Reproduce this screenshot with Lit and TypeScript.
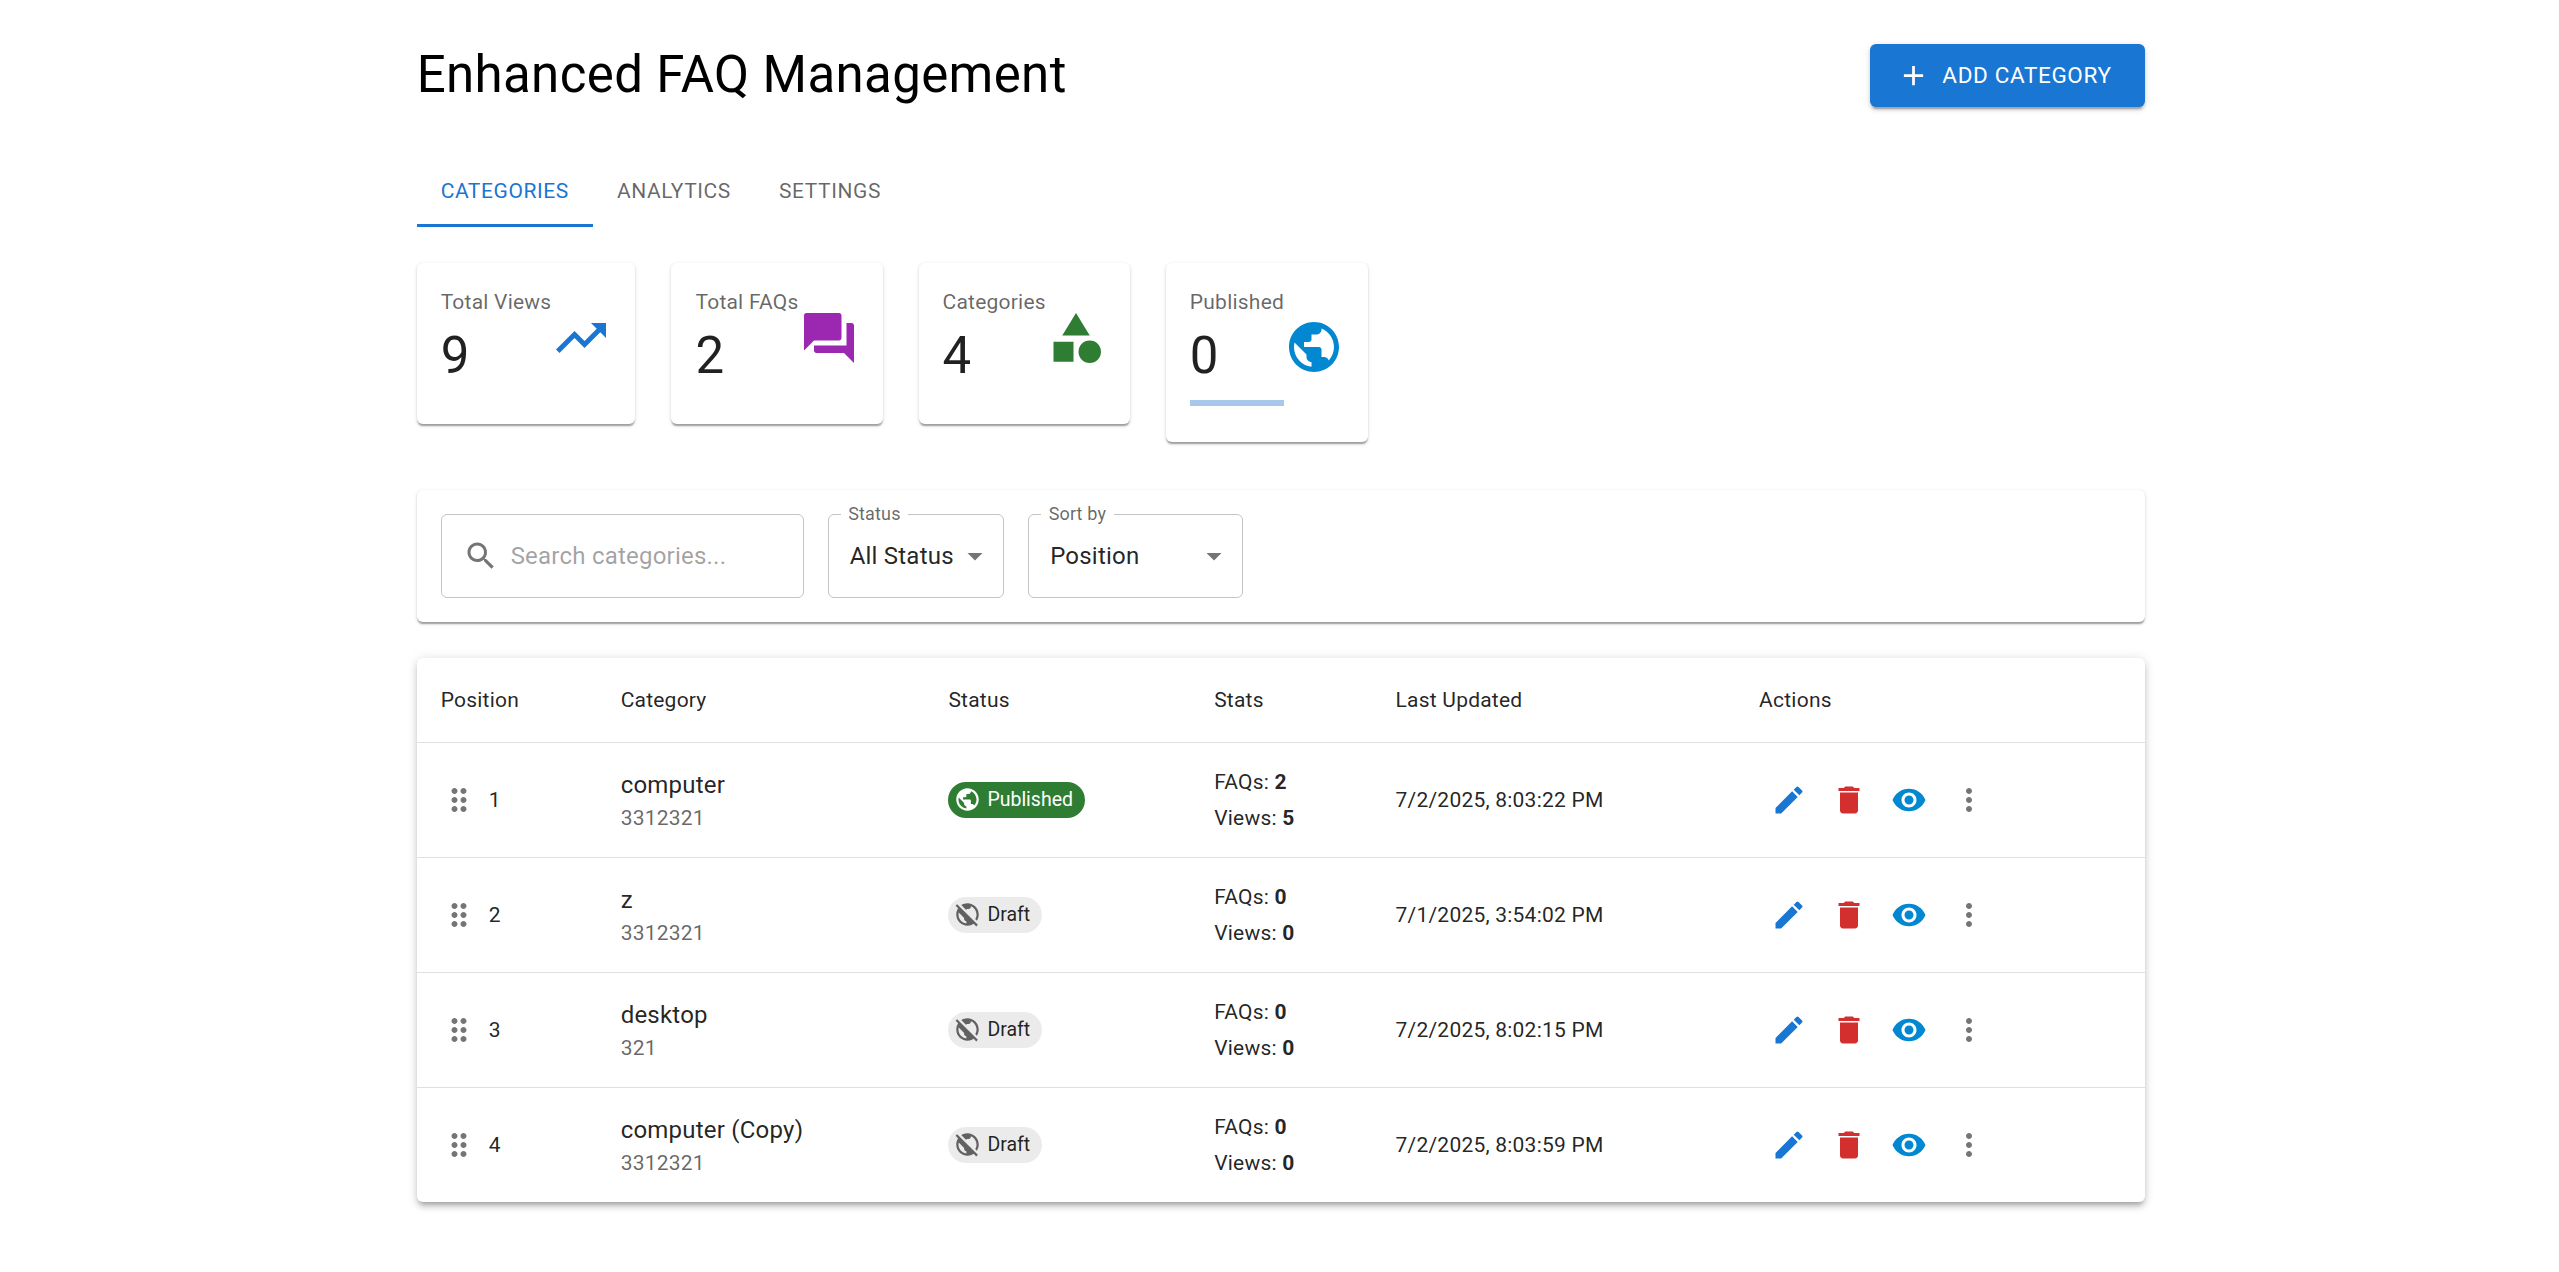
import { LitElement, html, css } from 'lit';
import { customElement } from 'lit/decorators.js';

const icons = {
  add: 'M19 13h-6v6h-2v-6H5v-2h6V5h2v6h6z',
  trending: 'm16 6 2.29 2.29-4.88 4.88-4-4L2 16.59 3.41 18l6-6 4 4 6.3-6.29L22 12V6z',
  forum: 'M21 6h-2v9H6v2c0 .55.45 1 1 1h11l4 4V7c0-.55-.45-1-1-1m-4 6V3c0-.55-.45-1-1-1H3c-.55 0-1 .45-1 1v14l4-4h10c.55 0 1-.45 1-1',
  category: 'm12 2-5.5 9h11z M3 13.5h8v8H3z M22 17.5a4.5 4.5 0 1 1-9 0 4.5 4.5 0 0 1 9 0',
  globe: 'M12 2C6.48 2 2 6.48 2 12s4.48 10 10 10 10-4.48 10-10S17.52 2 12 2m-1 17.93c-3.95-.49-7-3.85-7-7.93 0-.62.08-1.21.21-1.79L9 15v1c0 1.1.9 2 2 2zm6.9-2.54c-.26-.81-1-1.39-1.9-1.39h-1v-3c0-.55-.45-1-1-1H8v-2h2c.55 0 1-.45 1-1V7h2c1.1 0 2-.9 2-2v-.41c2.93 1.19 5 4.06 5 7.41 0 2.08-.8 3.97-2.1 5.39',
  globeOff: 'M11 8.17 6.49 3.66C8.07 2.61 9.96 2 12 2c5.52 0 10 4.48 10 10 0 2.04-.61 3.93-1.66 5.51l-1.46-1.46C19.59 14.87 20 13.48 20 12c0-3.35-2.07-6.22-5-7.41V5c0 1.1-.9 2-2 2h-2zm10.19 13.02-1.41 1.41-2.27-2.27C15.93 21.39 14.04 22 12 22 6.48 22 2 17.52 2 12c0-2.04.61-3.93 1.66-5.51L1.39 4.22 2.8 2.81zM11 18c-1.1 0-2-.9-2-2v-1l-4.79-4.79C4.08 10.79 4 11.38 4 12c0 4.08 3.05 7.44 7 7.93z',
  search: 'M15.5 14h-.79l-.28-.27C15.41 12.59 16 11.11 16 9.5 16 5.91 13.09 3 9.5 3S3 5.91 3 9.5 5.91 16 9.5 16c1.61 0 3.09-.59 4.23-1.57l.27.28v.79l5 4.99L20.49 19zm-6 0C7.01 14 5 11.99 5 9.5S7.01 5 9.5 5 14 7.01 14 9.5 11.99 14 9.5 14',
  drop: 'M7 10l5 5 5-5z',
  drag: 'M11 18c0 1.1-.9 2-2 2s-2-.9-2-2 .9-2 2-2 2 .9 2 2m-2-8c-1.1 0-2 .9-2 2s.9 2 2 2 2-.9 2-2-.9-2-2-2m0-6c-1.1 0-2 .9-2 2s.9 2 2 2 2-.9 2-2-.9-2-2-2m6 4c1.1 0 2-.9 2-2s-.9-2-2-2-2 .9-2 2 .9 2 2 2m0 2c-1.1 0-2 .9-2 2s.9 2 2 2 2-.9 2-2-.9-2-2-2m0 6c-1.1 0-2 .9-2 2s.9 2 2 2 2-.9 2-2-.9-2-2-2',
  edit: 'M3 17.25V21h3.75L17.81 9.94l-3.75-3.75zM20.71 7.04c.39-.39.39-1.02 0-1.41l-2.34-2.34a.9959.9959 0 0 0-1.41 0l-1.83 1.83 3.75 3.75z',
  trash: 'M6 19c0 1.1.9 2 2 2h8c1.1 0 2-.9 2-2V7H6zM19 4h-3.5l-1-1h-5l-1 1H5v2h14z',
  eye: 'M12 4.5C7 4.5 2.73 7.61 1 12c1.73 4.39 6 7.5 11 7.5s9.27-3.11 11-7.5c-1.73-4.39-6-7.5-11-7.5M12 17c-2.76 0-5-2.24-5-5s2.24-5 5-5 5 2.24 5 5-2.24 5-5 5m0-8c-1.66 0-3 1.34-3 3s1.34 3 3 3 3-1.34 3-3-1.34-3-3-3',
  more: 'M12 8c1.1 0 2-.9 2-2s-.9-2-2-2-2 .9-2 2 .9 2 2 2m0 2c-1.1 0-2 .9-2 2s.9 2 2 2 2-.9 2-2-.9-2-2-2m0 6c-1.1 0-2 .9-2 2s.9 2 2 2 2-.9 2-2-.9-2-2-2',
};

const icon = (d: string, cls = '') => html`<svg class="icon ${cls}" viewBox="0 0 24 24"><path d=${d}></path></svg>`;

const stats = [
  { label: 'Total Views', value: '9', d: icons.trending, color: 'primary' },
  { label: 'Total FAQs', value: '2', d: icons.forum, color: 'purple' },
  { label: 'Categories', value: '4', d: icons.category, color: 'green' },
  { label: 'Published', value: '0', d: icons.globe, color: 'info', progress: true },
];

const rows = [
  { pos: 1, name: 'computer', desc: '3312321', published: true, faqs: 2, views: 5, updated: '7/2/2025, 8:03:22 PM' },
  { pos: 2, name: 'z', desc: '3312321', published: false, faqs: 0, views: 0, updated: '7/1/2025, 3:54:02 PM' },
  { pos: 3, name: 'desktop', desc: '321', published: false, faqs: 0, views: 0, updated: '7/2/2025, 8:02:15 PM' },
  { pos: 4, name: 'computer (Copy)', desc: '3312321', published: false, faqs: 0, views: 0, updated: '7/2/2025, 8:03:59 PM' },
];

@customElement('app-root')
export class AppRoot extends LitElement {
  static styles = css`
    /* the source was captured at 1.5x, so everything below is in its own px */
    :host {
      display: block;
      zoom: 1.5;
      font-family: Roboto, "Liberation Sans", sans-serif;
      color: rgba(0, 0, 0, 0.87);
      background: #fff;
    }
    .page {
      box-sizing: border-box;
      max-width: 1200px;
      margin: 0 auto;
      padding: 29.33px 23.25px 40px 24.75px;
    }
    .icon { display: block; width: 24px; height: 24px; fill: currentColor; flex-shrink: 0; }
    .primary { color: #1976d2; }
    .purple { color: #9c27b0; }
    .green { color: #2e7d32; }
    .info { color: #0288d1; }
    .red { color: #d32f2f; }
    .grey { color: rgba(0, 0, 0, 0.54); }

    .head { display: flex; justify-content: space-between; align-items: center; margin-bottom: 32px; }
    h1 { margin: 0; font-size: 34px; font-weight: 400; line-height: 1.235; letter-spacing: 0.00735em; color: #000; }
    .add {
      display: flex;
      align-items: center;
      height: 42.25px;
      padding: 0 22px;
      box-sizing: border-box;
      border: 0;
      border-radius: 4px;
      background: #1976d2;
      color: #fff;
      font: 400 15px/26px Roboto, sans-serif;
      letter-spacing: 0.02857em;
      text-transform: uppercase;
      box-shadow: 0 3px 1px -2px rgba(0,0,0,.2), 0 2px 2px 0 rgba(0,0,0,.14), 0 1px 5px 0 rgba(0,0,0,.12);
    }
    .add .icon { width: 22px; height: 22px; margin: 0 8px 0 -4px; }

    .tabs { display: flex; height: 48px; margin-bottom: 24px; }
    .tab {
      box-sizing: border-box;
      padding: 0 16px;
      font-size: 14px;
      font-weight: 400;
      line-height: 48px;
      letter-spacing: 0.02857em;
      text-transform: uppercase;
      color: rgba(0, 0, 0, 0.6);
    }
    .tab.active { color: #1976d2; border-bottom: 2px solid #1976d2; }

    .paper { background: #fff; border-radius: 4px; box-shadow: 0 2px 1px -1px rgba(0,0,0,.2), 0 1px 1px 0 rgba(0,0,0,.14), 0 1px 3px 0 rgba(0,0,0,.12); }

    .cards { display: flex; align-items: flex-start; gap: 24px; margin-bottom: 32px; }
    .card { padding: 16px 16px 24px; display: flex; align-items: center; }
    .card-label { font-size: 14px; line-height: 1.43; letter-spacing: 0.01071em; color: rgba(0, 0, 0, 0.6); margin-bottom: 4.9px; }
    .card-value { font-size: 34px; line-height: 1.235; letter-spacing: 0.00735em; }
    .card .icon { width: 40px; height: 40px; }
    .bar { height: 4px; margin-top: 8px; background: #a7c8ea; }

    .filters { display: flex; gap: 16px; padding: 16px; margin-bottom: 24px; }
    .field {
      position: relative;
      box-sizing: border-box;
      display: flex;
      align-items: center;
      height: 56px;
      padding: 0 14px;
      border: 1px solid rgba(0, 0, 0, 0.23);
      border-radius: 4px;
      font-size: 16px;
      letter-spacing: 0.00938em;
    }
    .search { width: 242px; }
    .search .icon { margin-right: 8px; }
    .search input {
      flex: 1;
      min-width: 0;
      border: 0;
      outline: 0;
      padding: 0;
      font: inherit;
      letter-spacing: inherit;
      background: transparent;
    }
    .search input::placeholder { color: rgba(0, 0, 0, 0.87); opacity: 0.42; }
    .status { width: 117.67px; }
    .sort { width: 143.5px; }
    .field .caret { position: absolute; right: 7px; top: 50%; margin-top: -12px; }
    .field-label {
      position: absolute;
      left: 8px;
      top: -9px;
      padding: 0 5px;
      background: #fff;
      font-size: 12px;
      line-height: 17px;
      letter-spacing: 0.00938em;
      color: rgba(0, 0, 0, 0.6);
    }

    .table-wrap { overflow: hidden; box-shadow: 0 3px 3px -2px rgba(0,0,0,.2), 0 3px 4px 0 rgba(0,0,0,.14), 0 1px 8px 0 rgba(0,0,0,.12); }
    table { width: 100%; table-layout: fixed; border-collapse: separate; border-spacing: 0; font-size: 14px; letter-spacing: 0.01071em; }
    th, td { box-sizing: border-box; padding: 16px; text-align: left; vertical-align: middle; border-bottom: 1px solid #e0e0e0; line-height: 1.43; }
    th { font-weight: 400; line-height: 24px; }
    tr:last-child td { border-bottom: 0; }
    .c-pos { width: 120px; }
    .c-cat { width: 218.5px; }
    .c-status { width: 177.2px; }
    .c-stats { width: 120.9px; }
    .c-date { width: 242.4px; }

    .pos { display: flex; align-items: center; gap: 8px; }
    .name { font-size: 16px; line-height: 1.5; letter-spacing: 0.00938em; }
    .desc { color: rgba(0, 0, 0, 0.6); }
    .stat-line + .stat-line { margin-top: 3.8px; }
    .stat-line strong { font-weight: 700; }

    .chip {
      display: inline-flex;
      align-items: center;
      height: 24px;
      border-radius: 16px;
      font-size: 13px;
      letter-spacing: normal;
      background: rgba(0, 0, 0, 0.08);
      vertical-align: middle;
    }
    .chip .icon { width: 18px; height: 18px; margin: 0 -4px 0 4px; color: #616161; }
    .chip span { padding: 0 8px; }
    .chip.on { background: #2e7d32; color: #fff; }
    .chip.on .icon { color: #fff; }

    .actions { display: flex; }
    .btn { padding: 8px; }
  `;

  render() {
    return html`
      <div class="page">
        <div class="head">
          <h1>Enhanced FAQ Management</h1>
          <button class="add">${icon(icons.add)}Add Category</button>
        </div>

        <div class="tabs">
          <div class="tab active">Categories</div>
          <div class="tab">Analytics</div>
          <div class="tab">Settings</div>
        </div>

        <div class="cards">
          ${stats.map(s => html`
            <div class="paper card">
              <div>
                <div class="card-label">${s.label}</div>
                <div class="card-value">${s.value}</div>
                ${s.progress ? html`<div class="bar"></div>` : ''}
              </div>
              ${icon(s.d, s.color)}
            </div>
          `)}
        </div>

        <div class="paper filters">
          <div class="field search">
            ${icon(icons.search, 'grey')}
            <input placeholder="Search categories..." />
          </div>
          <div class="field status">
            <div class="field-label">Status</div>
            All Status
            ${icon(icons.drop, 'caret grey')}
          </div>
          <div class="field sort">
            <div class="field-label">Sort by</div>
            Position
            ${icon(icons.drop, 'caret grey')}
          </div>
        </div>

        <div class="paper table-wrap">
          <table>
            <thead>
              <tr>
                <th class="c-pos">Position</th>
                <th class="c-cat">Category</th>
                <th class="c-status">Status</th>
                <th class="c-stats">Stats</th>
                <th class="c-date">Last Updated</th>
                <th>Actions</th>
              </tr>
            </thead>
            <tbody>
              ${rows.map(r => html`
                <tr>
                  <td><div class="pos">${icon(icons.drag, 'grey')}${r.pos}</div></td>
                  <td>
                    <div class="name">${r.name}</div>
                    <div class="desc">${r.desc}</div>
                  </td>
                  <td>
                    <div class="chip ${r.published ? 'on' : ''}">
                      ${icon(r.published ? icons.globe : icons.globeOff)}
                      <span>${r.published ? 'Published' : 'Draft'}</span>
                    </div>
                  </td>
                  <td>
                    <div class="stat-line">FAQs: <strong>${r.faqs}</strong></div>
                    <div class="stat-line">Views: <strong>${r.views}</strong></div>
                  </td>
                  <td>${r.updated}</td>
                  <td>
                    <div class="actions">
                      <div class="btn primary">${icon(icons.edit)}</div>
                      <div class="btn red">${icon(icons.trash)}</div>
                      <div class="btn info">${icon(icons.eye)}</div>
                      <div class="btn grey">${icon(icons.more)}</div>
                    </div>
                  </td>
                </tr>
              `)}
            </tbody>
          </table>
        </div>
      </div>
    `;
  }
}
